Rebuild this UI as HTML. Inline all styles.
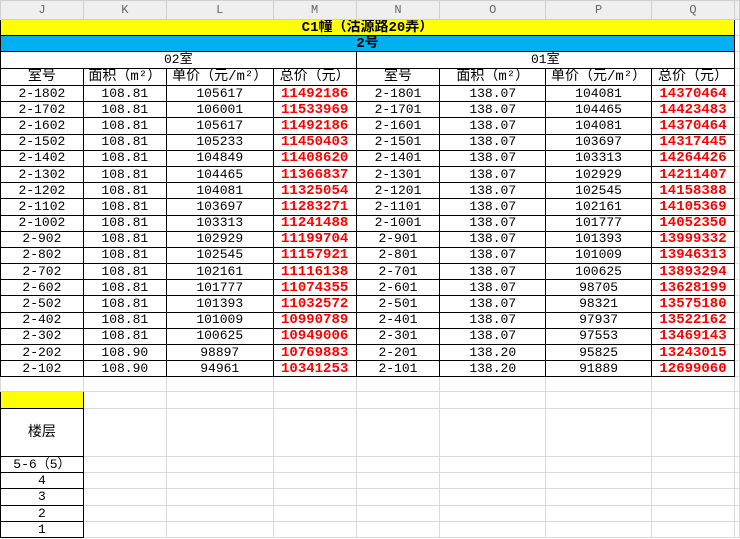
<!DOCTYPE html>
<html><head><meta charset="utf-8"><style>
body{margin:0;width:740px;height:539px;overflow:hidden;background:#fff;font-family:"Liberation Mono","Noto Sans CJK SC",monospace;font-size:13px;}
table{border-collapse:collapse;table-layout:fixed;position:absolute;left:0;top:0;}
td{border:1px solid #dadada;padding:0;text-align:center;white-space:nowrap;overflow:hidden;line-height:14px;color:#000;}
tr.ch td{background:#efefef;color:#666;border-color:#d0d0d0;font-size:12px;}
tr.d td{height:15.2px;}
tr.h td{font-size:14px;}
td.k{border:1px solid #000;}
.r{color:#f00;font-weight:bold;font-size:14px;}
.y{background:#ffff00;font-weight:bold;font-size:14px;}
.bl{background:#00b0f0;font-weight:bold;font-size:14px;}
.big{font-size:14px;}
</style></head><body>
<table>
<colgroup><col style="width:83px"><col style="width:83px"><col style="width:107px"><col style="width:83px"><col style="width:84px"><col style="width:106px"><col style="width:106px"><col style="width:83px"><col style="width:5px"></colgroup>
<tr class="ch" style="height:19px"><td>J</td><td>K</td><td>L</td><td>M</td><td>N</td><td>O</td><td>P</td><td>Q</td><td></td></tr>
<tr style="height:16px"><td colspan="8" class="k y">C1幢（沽源路20弄）</td><td></td></tr>
<tr style="height:16px"><td colspan="8" class="k bl">2号</td><td></td></tr>
<tr style="height:17px"><td colspan="4" class="k">02室</td><td colspan="4" class="k">01室</td><td></td></tr>
<tr class="h" style="height:17px"><td class="k">室号</td><td class="k">面积（m²）</td><td class="k">单价（元/m²）</td><td class="k">总价（元）</td><td class="k">室号</td><td class="k">面积（m²）</td><td class="k">单价（元/m²）</td><td class="k">总价（元）</td><td></td></tr>
<tr class="d"><td class="k">2-1802</td><td class="k">108.81</td><td class="k">105617</td><td class="k r">11492186</td><td class="k">2-1801</td><td class="k">138.07</td><td class="k">104081</td><td class="k r">14370464</td><td></td></tr>
<tr class="d"><td class="k">2-1702</td><td class="k">108.81</td><td class="k">106001</td><td class="k r">11533969</td><td class="k">2-1701</td><td class="k">138.07</td><td class="k">104465</td><td class="k r">14423483</td><td></td></tr>
<tr class="d"><td class="k">2-1602</td><td class="k">108.81</td><td class="k">105617</td><td class="k r">11492186</td><td class="k">2-1601</td><td class="k">138.07</td><td class="k">104081</td><td class="k r">14370464</td><td></td></tr>
<tr class="d"><td class="k">2-1502</td><td class="k">108.81</td><td class="k">105233</td><td class="k r">11450403</td><td class="k">2-1501</td><td class="k">138.07</td><td class="k">103697</td><td class="k r">14317445</td><td></td></tr>
<tr class="d"><td class="k">2-1402</td><td class="k">108.81</td><td class="k">104849</td><td class="k r">11408620</td><td class="k">2-1401</td><td class="k">138.07</td><td class="k">103313</td><td class="k r">14264426</td><td></td></tr>
<tr class="d"><td class="k">2-1302</td><td class="k">108.81</td><td class="k">104465</td><td class="k r">11366837</td><td class="k">2-1301</td><td class="k">138.07</td><td class="k">102929</td><td class="k r">14211407</td><td></td></tr>
<tr class="d"><td class="k">2-1202</td><td class="k">108.81</td><td class="k">104081</td><td class="k r">11325054</td><td class="k">2-1201</td><td class="k">138.07</td><td class="k">102545</td><td class="k r">14158388</td><td></td></tr>
<tr class="d"><td class="k">2-1102</td><td class="k">108.81</td><td class="k">103697</td><td class="k r">11283271</td><td class="k">2-1101</td><td class="k">138.07</td><td class="k">102161</td><td class="k r">14105369</td><td></td></tr>
<tr class="d"><td class="k">2-1002</td><td class="k">108.81</td><td class="k">103313</td><td class="k r">11241488</td><td class="k">2-1001</td><td class="k">138.07</td><td class="k">101777</td><td class="k r">14052350</td><td></td></tr>
<tr class="d"><td class="k">2-902</td><td class="k">108.81</td><td class="k">102929</td><td class="k r">11199704</td><td class="k">2-901</td><td class="k">138.07</td><td class="k">101393</td><td class="k r">13999332</td><td></td></tr>
<tr class="d"><td class="k">2-802</td><td class="k">108.81</td><td class="k">102545</td><td class="k r">11157921</td><td class="k">2-801</td><td class="k">138.07</td><td class="k">101009</td><td class="k r">13946313</td><td></td></tr>
<tr class="d"><td class="k">2-702</td><td class="k">108.81</td><td class="k">102161</td><td class="k r">11116138</td><td class="k">2-701</td><td class="k">138.07</td><td class="k">100625</td><td class="k r">13893294</td><td></td></tr>
<tr class="d"><td class="k">2-602</td><td class="k">108.81</td><td class="k">101777</td><td class="k r">11074355</td><td class="k">2-601</td><td class="k">138.07</td><td class="k">98705</td><td class="k r">13628199</td><td></td></tr>
<tr class="d"><td class="k">2-502</td><td class="k">108.81</td><td class="k">101393</td><td class="k r">11032572</td><td class="k">2-501</td><td class="k">138.07</td><td class="k">98321</td><td class="k r">13575180</td><td></td></tr>
<tr class="d"><td class="k">2-402</td><td class="k">108.81</td><td class="k">101009</td><td class="k r">10990789</td><td class="k">2-401</td><td class="k">138.07</td><td class="k">97937</td><td class="k r">13522162</td><td></td></tr>
<tr class="d"><td class="k">2-302</td><td class="k">108.81</td><td class="k">100625</td><td class="k r">10949006</td><td class="k">2-301</td><td class="k">138.07</td><td class="k">97553</td><td class="k r">13469143</td><td></td></tr>
<tr class="d"><td class="k">2-202</td><td class="k">108.90</td><td class="k">98897</td><td class="k r">10769883</td><td class="k">2-201</td><td class="k">138.20</td><td class="k">95825</td><td class="k r">13243015</td><td></td></tr>
<tr class="d"><td class="k">2-102</td><td class="k">108.90</td><td class="k">94961</td><td class="k r">10341253</td><td class="k">2-101</td><td class="k">138.20</td><td class="k">91889</td><td class="k r">12699060</td><td></td></tr>
<tr style="height:15px"><td></td><td></td><td></td><td></td><td></td><td></td><td></td><td></td><td></td></tr>
<tr style="height:17px"><td class="k" style="background:#ffff00"></td><td></td><td></td><td></td><td></td><td></td><td></td><td></td><td></td></tr>
<tr style="height:48px"><td class="k big">楼层</td><td></td><td></td><td></td><td></td><td></td><td></td><td></td><td></td></tr>
<tr style="height:16px"><td class="k">5-6（5）</td><td></td><td></td><td></td><td></td><td></td><td></td><td></td><td></td></tr>
<tr style="height:16px"><td class="k">4</td><td></td><td></td><td></td><td></td><td></td><td></td><td></td><td></td></tr>
<tr style="height:17px"><td class="k">3</td><td></td><td></td><td></td><td></td><td></td><td></td><td></td><td></td></tr>
<tr style="height:16px"><td class="k">2</td><td></td><td></td><td></td><td></td><td></td><td></td><td></td><td></td></tr>
<tr style="height:16px"><td class="k">1</td><td></td><td></td><td></td><td></td><td></td><td></td><td></td><td></td></tr>
</table>
</body></html>
